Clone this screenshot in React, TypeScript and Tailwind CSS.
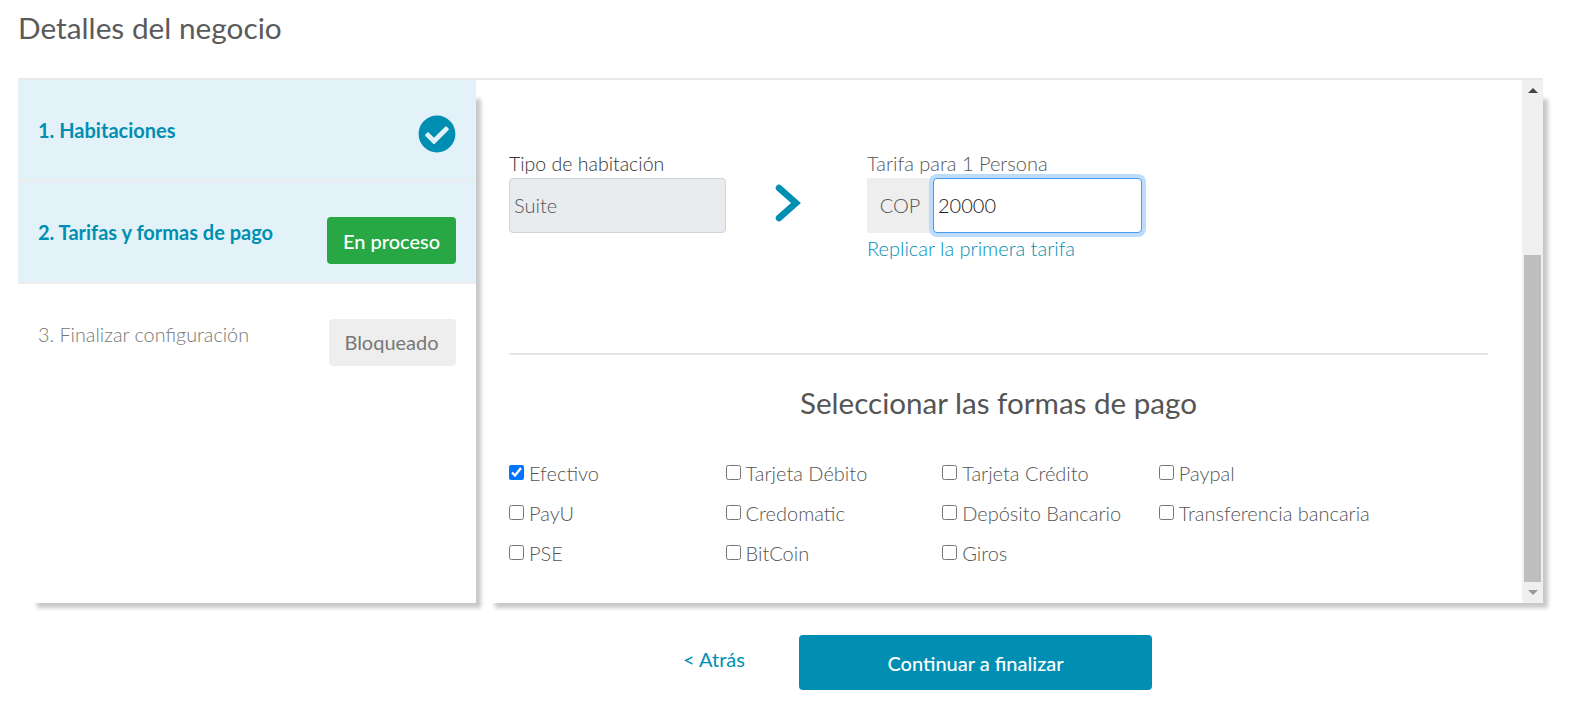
import React from 'react';
import { FaCheckCircle } from 'react-icons/fa';

const paymentMethods = [
  { label: 'Efectivo', checked: true },
  { label: 'Tarjeta Débito' },
  { label: 'Tarjeta Crédito' },
  { label: 'Paypal' },
  { label: 'PayU' },
  { label: 'Credomatic' },
  { label: 'Depósito Bancario' },
  { label: 'Transferencia bancaria' },
  { label: 'PSE' },
  { label: 'BitCoin' },
  { label: 'Giros' },
];

const App: React.FC = () => {
  return (
    <div className="min-h-[715px] bg-white [font-family:Lato,sans-serif] text-[#555]">
      <h1 className="h-[78px] pl-[18px] pt-[9px] text-[29.8px] leading-[38px] font-normal text-[#5a5a5a]">Detalles del negocio</h1>

      <div className="mx-[18px] flex h-[525px] w-[1525px] border-t-2 border-[#e9e9e9]">
        {/* Pasos */}
        <div className="relative z-10 w-[458px] shrink-0 bg-white shadow-[12px_12px_4px_-7px_rgba(0,0,0,0.22)]">
          <div className="flex h-[100px] justify-between bg-[#e3f2f8] pl-5 pr-5">
            <span className="pt-[37px] text-[20px] leading-[27px] font-bold text-[#008fb3]">1. Habitaciones</span>
            <FaCheckCircle className="mt-[35px] text-[#008fb3]" size={38} />
          </div>
          <div className="flex h-[104px] justify-between border-y-2 border-[#ececec] bg-[#e3f2f8] pl-5 pr-5">
            <span className="pt-[37px] text-[20px] leading-[27px] font-bold text-[#008fb3]">2. Tarifas y formas de pago</span>
            <span className="mt-[35px] flex h-[47px] w-[129px] items-center justify-center rounded bg-[#28a745] text-[20px] font-medium text-white">
              En proceso
            </span>
          </div>
          <div className="flex justify-between pl-5 pr-5">
            <span className="pt-[37px] text-[19.8px] leading-[27px] font-light text-[#777]">3. Finalizar configuración</span>
            <span className="mt-[35px] flex h-[47px] w-[127px] items-center justify-center rounded bg-[#eee] pb-[2px] pr-[2px] text-[20px] text-[#777]">
              Bloqueado
            </span>
          </div>
        </div>

        {/* Contenido */}
        <div className="flex min-w-0 flex-1 bg-white shadow-[12px_12px_4px_-7px_rgba(0,0,0,0.22)]">
          <div className="min-w-0 flex-1 pl-[33px] pr-[34px]">
            <div className="flex h-[275px] border-b-2 border-[#e5e5e5] pt-[70px]">
              <div className="w-[217px]">
                <div className="pb-px text-[19.5px] leading-[27px] font-light text-[#333]">Tipo de habitación</div>
                <div className="flex h-[55px] items-center rounded border border-[#ced4da] bg-[#e9ecef] pb-[2px] pl-[4px] text-[20px] font-light text-[#555]">
                  Suite
                </div>
              </div>
              <div className="ml-[49px] w-[92px] pt-[34px]">
                <svg width="26" height="38" viewBox="0 0 26 38" fill="none">
                  <path d="M4 4 L21 19 L4 34" stroke="#008fb3" strokeWidth="6.5" strokeLinecap="round" strokeLinejoin="miter" />
                </svg>
              </div>
              <div>
                <div className="pb-px text-[20px] leading-[27px] font-light text-[#555]">Tarifa para 1 Persona</div>
                <div className="flex h-[55px] w-[275px]">
                  <span className="flex w-[66px] items-center justify-center bg-[#eee] pb-[2px] text-[20px] font-light">COP</span>
                  <input
                    readOnly
                    value="20000"
                    className="h-[55px] w-[209px] rounded-sm border border-[#4a9af0] bg-white pb-[2px] pl-[4px] text-[20px] font-light text-[#222] shadow-[0_0_0_4px_#bcdcfa] outline-none"
                  />
                </div>
                <a href="#" className="mt-[2px] block text-[20px] leading-[27px] font-light text-[#008fb3]">
                  Replicar la primera tarifa
                </a>
              </div>
            </div>

            <h2 className="pt-[29px] pb-[37px] text-center text-[29.6px] leading-[38px] font-normal text-[#555]">
              Seleccionar las formas de pago
            </h2>

            <div className="grid grid-cols-[216.6px_216.6px_216.6px_auto] gap-y-[13px]">
              {paymentMethods.map((method) => (
                <label key={method.label} className="flex h-[27px] items-center text-[20px] font-light text-[#555]">
                  <input type="checkbox" readOnly checked={!!method.checked} className="mr-[5px] mb-px h-[15px] w-[15px]" />
                  {method.label}
                </label>
              ))}
            </div>
          </div>

          {/* Barra de desplazamiento */}
          <div className="flex w-[21px] shrink-0 flex-col items-center bg-[#f0f0f0]">
            <div className="flex h-[21px] items-center justify-center">
              <div className="h-0 w-0 border-x-[5px] border-b-[5px] border-x-transparent border-b-[#444]" />
            </div>
            <div className="mt-[154px] h-[327px] w-[17px] bg-[#bebebe]" />
            <div className="flex h-[21px] flex-1 items-center justify-center">
              <div className="h-0 w-0 border-x-[5px] border-t-[5px] border-x-transparent border-t-[#999]" />
            </div>
          </div>
        </div>
      </div>

      <div className="flex items-start pl-[683px] pt-[32px]">
        <a href="#" className="w-[116px] pt-[11px] text-[20px] leading-[27px] font-normal text-[#008fb3]">
          &lt; Atrás
        </a>
        <button className="h-[55px] w-[353px] rounded bg-[#008fb3] pt-[1px] text-[20px] font-medium text-white">
          Continuar a finalizar
        </button>
      </div>
    </div>
  );
};

export default App;
